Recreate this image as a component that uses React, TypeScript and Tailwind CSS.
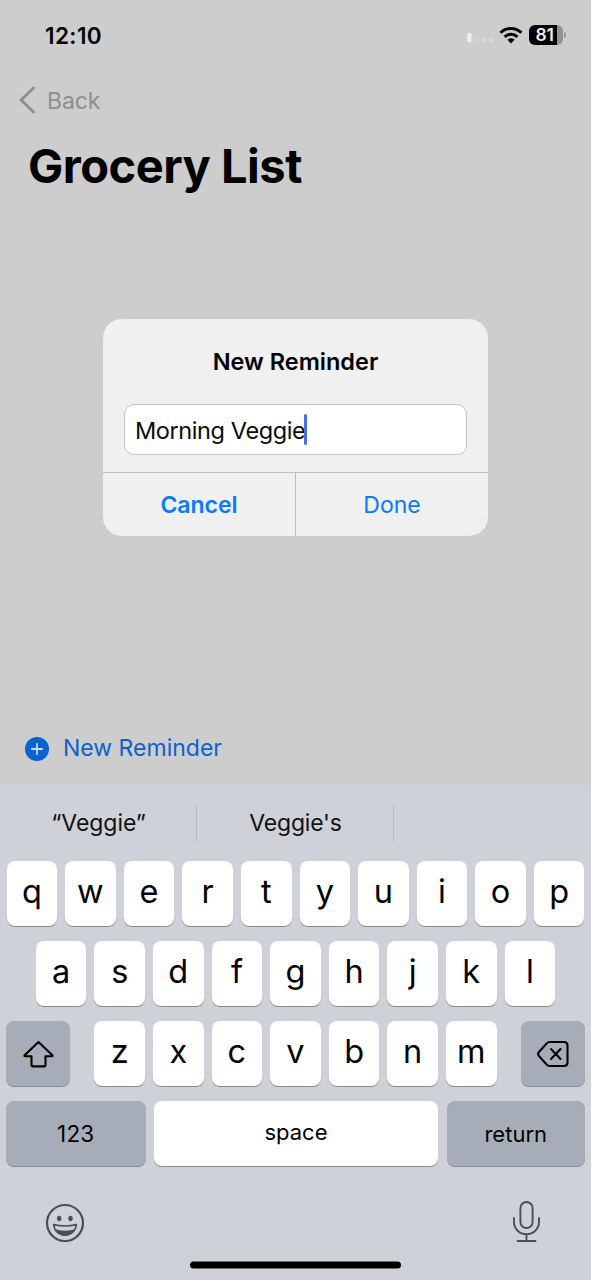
import type { ReactNode } from "react";

const keyShadow = "shadow-[0_1px_0_0_#898a8d]";

function LetterKey({ children }: { children: string }) {
  return (
    <div
      className={`flex h-[65px] w-[50.6px] shrink-0 items-center justify-center rounded-[8px] bg-white pb-[3px] text-[32.5px] leading-none font-normal text-black ${keyShadow}`}
    >
      {children}
    </div>
  );
}

function LetterRow({ letters }: { letters: string }) {
  return (
    <div className="flex justify-center gap-[8px]">
      {letters.split("").map((letter) => (
        <LetterKey key={letter}>{letter}</LetterKey>
      ))}
    </div>
  );
}

function ActionKey({ className, children }: { className: string; children: ReactNode }) {
  return (
    <div
      className={`flex h-[65px] shrink-0 items-center justify-center rounded-[8px] text-[22px] text-black ${className}`}
    >
      {children}
    </div>
  );
}

function StatusBar() {
  return (
    <div className="flex h-[70px] items-center justify-between pr-[25px] pl-[45px]">
      <span className="pt-px text-[22.5px] font-semibold tracking-[0.4px]">12:10</span>
      <div className="flex items-center">
        <svg width="28" height="12" viewBox="0 0 28 12" className="mt-[6px] mr-[4px]">
          <rect x="0" y="1" width="4.5" height="9" rx="1.3" fill="#ececec" />
          <rect x="8" y="6" width="4" height="4.5" rx="1.2" fill="#d4d4d4" />
          <rect x="15" y="6" width="4" height="4.5" rx="1.2" fill="#d8d8d8" />
          <rect x="22" y="6" width="4" height="4.5" rx="1.2" fill="#d8d8d8" />
        </svg>
        <svg width="24" height="18" viewBox="0 0 24 18" className="mr-[6px]">
          <g fill="none" stroke="#000" strokeWidth="3">
            <path d="M1.5 6.7a15 15 0 0 1 21 0" />
            <path d="M5.6 10.9a9.1 9.1 0 0 1 12.8 0" />
          </g>
          <path d="M12 17.4 8.4 13.8a5.1 5.1 0 0 1 7.2 0z" fill="#000" />
        </svg>
        <div className="flex h-[20px] w-[34px] items-center overflow-hidden rounded-[6px] bg-[linear-gradient(to_right,#000_0_28px,#929292_28px)] pl-[7px] text-[17.5px] leading-none font-semibold tracking-[-0.2px] text-[#eee]">
          81
        </div>
        <div className="ml-[1.5px] h-[6px] w-[2px] rounded-r-full bg-[#999]" />
      </div>
    </div>
  );
}

function ReminderDialog() {
  return (
    <div className="absolute top-[319px] left-[103px] flex h-[217px] w-[385px] flex-col overflow-hidden rounded-[19px] bg-[#f0f0f0]">
      <h2 className="mt-[28px] text-center text-[23.5px] leading-[30px] font-semibold">
        New Reminder
      </h2>
      <div className="mx-[21px] mt-[27px] flex h-[51px] items-center rounded-[10px] border border-[#c4c4c5] bg-white pl-[10px]">
        <span className="pt-[3px] text-[23.5px] tracking-[-0.4px] text-[#0a0a0a]">Morning Veggie</span>
        <span className="-ml-px h-[31px] w-[3px] rounded-full bg-[#4a6ee0]" />
      </div>
      <div className="mt-[17px] flex flex-1 border-t border-[#bfbfc1] text-[23px] text-[#087aff]">
        <div className="flex flex-1 items-center justify-center pt-[2px] font-semibold">Cancel</div>
        <div className="w-px bg-[#bfbfc1]" />
        <div className="flex flex-1 items-center justify-center pt-[2px]">Done</div>
      </div>
    </div>
  );
}

function Keyboard() {
  return (
    <div className="h-[495px] bg-[#cfd1d9] px-[6px]">
      <div className="flex h-[76px] items-center text-[23px] text-[#111]">
        <div className="w-[190px] pr-[5px] text-center tracking-[-0.05px]">“Veggie”</div>
        <div className="h-[36px] w-px bg-[#b6b8c0]" />
        <div className="w-[196px] pl-px text-center tracking-[-0.2px]">Veggie's</div>
        <div className="h-[36px] w-px bg-[#b6b8c0]" />
      </div>
      <div className="flex flex-col gap-[15px]">
        <LetterRow letters="qwertyuiop" />
        <LetterRow letters="asdfghjkl" />
        <div className="flex justify-between">
          <ActionKey className="w-[64px] bg-[#a7adb8] pt-px shadow-[0_1px_0_0_#848b93]">
            <svg width="32" height="28" viewBox="0 0 32 28" fill="none" stroke="#000" strokeWidth="2.1" strokeLinejoin="round" className="translate-x-[0.5px]">
              <path d="M16 2 2.1 15.3q-.6.9.5.9H9v9q0 1.2 1.2 1.2h11.6q1.2 0 1.2-1.2v-9h6.4q1.1 0 .5-.9z" />
            </svg>
          </ActionKey>
          <LetterRow letters="zxcvbnm" />
          <ActionKey className="w-[64px] bg-[#a7adb8] pt-px shadow-[0_1px_0_0_#848b93]">
            <svg width="32" height="28" viewBox="0 0 32 28" fill="none" stroke="#000" strokeWidth="2.1" strokeLinecap="round" strokeLinejoin="round">
              <path d="M12.8 2H27q3.5 0 3.5 3.5v17Q30.5 26 27 26H12.8Q11 26 9.7 24.6L2 16Q.3 14 2 12L9.7 3.4Q11 2 12.8 2z" />
              <path d="m14 9 9.5 10M23.500 9 14 19" />
            </svg>
          </ActionKey>
        </div>
        <div className="flex justify-between">
          <ActionKey className="w-[139.5px] bg-[#a7adb8] pt-px shadow-[0_1px_0_0_#848b93]">
            <span className="text-[22.5px] tracking-[0.2px]">123</span>
          </ActionKey>
          <ActionKey className="w-[284px] bg-white pb-[2px] shadow-[0_1px_0_0_#898a8d]">space</ActionKey>
          <ActionKey className="w-[138.5px] bg-[#a7adb8] pt-px shadow-[0_1px_0_0_#848b93]">return</ActionKey>
        </div>
      </div>
      <div className="flex h-[95px] justify-between pt-[34px] pr-[44px] pl-[39px]">
        <svg width="40" height="40" viewBox="0 0 40 40" fill="#4b4e55" className="mt-[3px]">
          <circle cx="20" cy="20" r="18" fill="none" stroke="#4b4e55" strokeWidth="2.2" />
          <ellipse cx="14.2" cy="15.5" rx="2.2" ry="2.8" />
          <ellipse cx="25.5" cy="15.5" rx="2.2" ry="2.8" />
          <path d="M8.6 21.6q11.4 3 22.8 0c-.7 6.4-5.4 10.6-11.4 10.6S9.3 28 8.6 21.6z" fill="none" stroke="#4b4e55" strokeWidth="1.5" strokeLinejoin="round" />
          <path d="M9.5 26q10.5 3.4 21 0c-1.8 4.2-5.8 6.8-10.5 6.8S11.3 30.2 9.5 26z" />
        </svg>
        <svg width="29" height="44" viewBox="0 0 29 44" fill="none" stroke="#4b4e55" strokeWidth="1.9" strokeLinecap="round">
          <rect x="8.4" y="2" width="12.2" height="26" rx="6.1" />
          <path d="M2 18v4.3a12.5 12 0 0 0 25 0V18M14.5 34.5V41M5.5 41h18" />
        </svg>
      </div>
      <div className="mx-auto h-[7px] w-[211px] translate-y-[0.5px] rounded-full bg-black" />
    </div>
  );
}

export default function App() {
  return (
    <div className="relative h-[1280px] w-[591px] overflow-hidden bg-[#cdcdcd] font-['Inter','Liberation_Sans',sans-serif] text-black">
      <div className="flex h-[785px] flex-col">
        <StatusBar />
        <div className="flex h-[60px] items-center gap-[11px] pl-[18px] text-[#8e8e8e]">
          <svg width="18" height="28" viewBox="0 0 18 28" fill="none" stroke="currentColor" strokeWidth="3" strokeLinecap="round" strokeLinejoin="round">
            <path d="M15.5 2 3 14l12.5 12" />
          </svg>
          <span className="pt-[2px] text-[23px] tracking-[-0.1px]">Back</span>
        </div>
        <h1 className="pl-[28px] text-[47px] leading-[72px] font-bold tracking-[-0.5px]">Grocery List</h1>
        <div className="mt-auto flex h-[73px] items-center gap-[14px] pl-[25px] text-[#0c60cf]">
          <svg width="24" height="24" viewBox="0 0 24 24">
            <circle cx="12" cy="12" r="12" fill="#0862d2" />
            <path d="M12 6.8v10.4M6.8 12h10.4" stroke="#cdd6e2" strokeWidth="1.8" strokeLinecap="round" />
          </svg>
          <span className="text-[23px]">New Reminder</span>
        </div>
      </div>
      <Keyboard />
      <ReminderDialog />
    </div>
  );
}
